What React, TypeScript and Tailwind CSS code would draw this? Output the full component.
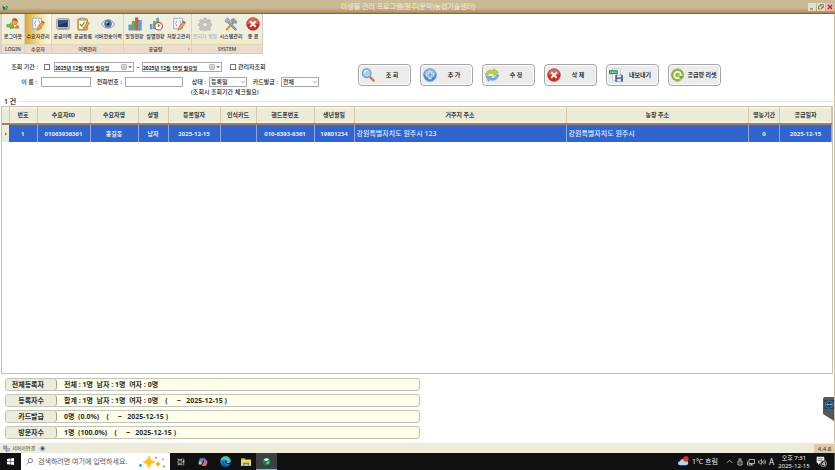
import React, { useState } from 'react';

interface IconProps {
  className?: string;
}

interface RibbonItem {
  label: string;
  icon: React.FC<IconProps>;
  width: string;
  active?: boolean;
  disabled?: boolean;
}

interface RibbonGroup {
  title: string;
  items: RibbonItem[];
  launcher?: boolean;
}

const Svg: React.FC<IconProps & { children: React.ReactNode }> = ({
  className = 'size-4',
  children,
}) => (
  <svg viewBox="0 0 16 16" className={`shrink-0 ${className}`} fill="none" aria-hidden="true">
    {children}
  </svg>
);

const LogoutIcon: React.FC<IconProps> = ({ className }) => (
  <Svg className={className}>
    <path d="M5 13c0-3 2-4.500 5-4.500s5.500 1.500 5.500 4.500z" fill="#d9822b" />
    <path d="M8 9l2 3 2-3z" fill="#fff3d6" />
    <circle cx="10" cy="5.500" r="3.200" fill="#e9a860" stroke="#b8651b" strokeWidth=".6" />
    <path d="M6.800 5c0-3 2-3.500 3.400-3.500S13.500 2.500 13.200 5c-2-.2-4-1-5-1.500z" fill="#b05a14" />
    <path d="M1 8.500h4V6.500L9 10l-4 3.500v-2H1z" fill="#7cc242" stroke="#4c8a1f" strokeWidth=".6" />
  </Svg>
);

const NoteIcon: React.FC<IconProps> = ({ className }) => (
  <Svg className={className}>
    <path d="M2 1.500h10v12H2z" fill="#f7f9fd" stroke="#90a5c8" />
    <path d="M6 4c-1.500 0-.5 3-2 3.500 1.500.5.5 3 2 3.500M8.500 4c1.500 0 .5 3 2 3.500-1.500.5-.5 3-2 3.500" stroke="#6d8cc4" strokeWidth=".9" />
    <path d="M13 4.500l2.500 1.800-5.500 7.500-3 1.500.5-3.400z" fill="#f0a040" stroke="#b56a1c" strokeWidth=".6" />
    <path d="M13 4.500l2.500 1.800-1 1.400L12 6z" fill="#d9534a" />
  </Svg>
);

const MonitorIcon: React.FC<IconProps> = ({ className }) => (
  <Svg className={className}>
    <rect x="1" y="2" width="14" height="12" rx="1.500" fill="#d8d4cb" stroke="#77736b" strokeWidth=".8" />
    <rect x="2.500" y="3.500" width="11" height="8" fill="#1d3768" />
    <path d="M2.500 3.500h11v3c-4 0-7 1-11 3z" fill="#33538c" />
    <path d="M3 12.800h10" stroke="#77736b" strokeWidth=".8" />
  </Svg>
);

const ClipboardIcon: React.FC<IconProps> = ({ className }) => (
  <Svg className={className}>
    <rect x="2" y="2" width="11" height="13" rx="1" fill="#e3a64c" stroke="#a66c20" strokeWidth=".7" />
    <path d="M3.500 4h8v9.500h-8z" fill="#fff" />
    <path d="M5 1h5v2.500H5z" fill="#b9bfca" stroke="#777f8d" strokeWidth=".5" />
    <path d="M4.500 8l2 2.500L10 5.500" stroke="#61a82c" strokeWidth="1.400" />
    <path d="M13.500 5.500l2 1.500-5 6.500-2.500 1 .4-2.700z" fill="#f0a040" stroke="#b56a1c" strokeWidth=".6" />
  </Svg>
);

const EyeIcon: React.FC<IconProps> = ({ className }) => (
  <Svg className={className}>
    <path d="M.5 8.500C3 4 6 3 8.200 3S13.500 4.500 15.500 8.500C13 12 10.500 12.800 8 12.800S2.500 11.500.5 8.500z" fill="#eef3f9" stroke="#7c8798" strokeWidth="1" />
    <circle cx="8" cy="7.800" r="4" fill="#5a86bb" stroke="#2e5587" strokeWidth=".7" />
    <circle cx="8" cy="7.800" r="1.900" fill="#14233a" />
    <circle cx="6.900" cy="6.500" r=".9" fill="#fff" />
  </Svg>
);

const ChartIcon: React.FC<IconProps> = ({ className }) => (
  <Svg className={className}>
    <rect x="1" y="9" width="3" height="6" fill="#5f9de0" stroke="#3a6fae" strokeWidth=".5" />
    <rect x="4.700" y="5" width="3" height="10" fill="#6ab549" stroke="#3f812a" strokeWidth=".5" />
    <rect x="8.400" y="1" width="3" height="14" fill="#e0574a" stroke="#a3332a" strokeWidth=".5" />
    <rect x="12.100" y="4" width="3" height="11" fill="#5f9de0" stroke="#3a6fae" strokeWidth=".5" />
  </Svg>
);

const ChartClockIcon: React.FC<IconProps> = ({ className }) => (
  <Svg className={className}>
    <rect x="1" y="8" width="3" height="6" fill="#5f9de0" />
    <rect x="4.700" y="4.500" width="3" height="9.500" fill="#6ab549" />
    <rect x="8.400" y="1" width="3" height="8" fill="#5f9de0" />
    <circle cx="11" cy="10.500" r="4.300" fill="#fff" stroke="#cf4a3e" strokeWidth="1.300" />
    <path d="M11 7.800v2.900l2-1.200" stroke="#444" strokeWidth=".9" />
  </Svg>
);

const GearIcon: React.FC<IconProps> = ({ className }) => (
  <Svg className={className}>
    <path
      d="M6.700 1h2.600l.4 2 1.400.6 1.700-1.200 1.900 1.900-1.200 1.700.6 1.300 2 .4v2.600l-2 .4-.6 1.400 1.200 1.700-1.900 1.800-1.700-1.100-1.400.5-.4 2H6.700l-.4-2-1.400-.5-1.700 1.100-1.900-1.800 1.200-1.700-.6-1.400-1.500-.4V7.700l1.500-.4.6-1.300-1.200-1.700 1.900-1.900 1.700 1.200L6.300 3z"
      fill="#c3c3c0"
      stroke="#a8a8a5"
      strokeWidth=".5"
    />
    <circle cx="8" cy="8.800" r="2.600" fill="#efeee4" stroke="#a0a09d" strokeWidth=".6" />
  </Svg>
);

const ToolsIcon: React.FC<IconProps> = ({ className }) => (
  <Svg className={className}>
    <path d="M4.500 5L13 14" stroke="#4775ae" strokeWidth="2.800" strokeLinecap="round" />
    <path d="M4.500 5L13 14" stroke="#9dbfe8" strokeWidth="1.200" strokeLinecap="round" />
    <path d="M1 3.500l1 2.500 2.500.6L6.500 4 5 1.500 2.800 1l1 2z" fill="#a9b6c6" stroke="#6c7b8f" strokeWidth=".5" />
    <path d="M10 7L3 14.300" stroke="#e09137" strokeWidth="2.400" strokeLinecap="round" />
    <path d="M7.500 3.500L11 1.500l4 4-1.200 2-2-1-1.800 1.200z" fill="#909dad" stroke="#5e6c7e" strokeWidth=".5" />
  </Svg>
);

const CloseIcon: React.FC<IconProps> = ({ className }) => (
  <Svg className={className}>
    <circle cx="8" cy="8" r="7.200" fill="#c93026" stroke="#9b2119" strokeWidth=".7" />
    <path d="M1.500 7.500a6.500 6.500 0 0113 0c-4 1.300-9 1.300-13 0z" fill="#e3685c" />
    <path d="M5.400 5.400l5.200 5.200m0-5.200l-5.200 5.200" stroke="#fff" strokeWidth="2.100" strokeLinecap="round" />
  </Svg>
);

const MagnifierIcon: React.FC<IconProps> = ({ className }) => (
  <Svg className={className}>
    <path d="M9.500 9.500l5 5" stroke="#c07a3a" strokeWidth="2.400" strokeLinecap="round" />
    <circle cx="6.500" cy="6" r="4.900" fill="#a9d0f5" stroke="#7698c8" strokeWidth="1.400" />
    <path d="M3.300 5.500c.5-2 2.500-3 4.200-2.500" stroke="#fff" strokeWidth="1.300" />
  </Svg>
);

const PlusIcon: React.FC<IconProps> = ({ className }) => (
  <Svg className={className}>
    <circle cx="8" cy="8" r="7.200" fill="#4d93d3" stroke="#3673ae" strokeWidth=".7" />
    <path d="M1.500 7.500a6.500 6.500 0 0113 0c-4 1.300-9 1.300-13 0z" fill="#8fc0ea" />
    <path d="M6.700 3.800h2.600v2.900h2.900v2.600H9.300v2.900H6.700V9.300H3.800V6.700h2.900z" fill="#69aae2" stroke="#fff" strokeWidth=".9" />
  </Svg>
);

const RefreshIcon: React.FC<IconProps> = ({ className }) => (
  <Svg className={className}>
    <path d="M.5 8C.5 3.500 5 1.500 10 3V.8L15.500 5 10 8.800V6.500C6.500 5.500 4 6 3 8.500z" fill="#b4d544" stroke="#8aaf2c" strokeWidth=".6" />
    <path d="M15.300 7.500c.7 5-5.300 8-9.800 6L4 15.300 1 9.500l7 .3-1.600 1.700c3 1 6-.5 6.400-3.500z" fill="#7db1e2" stroke="#5189c0" strokeWidth=".6" />
  </Svg>
);

const ExportIcon: React.FC<IconProps> = ({ className }) => (
  <Svg className={className}>
    <path d="M4 1h7l2 2v11H4z" fill="#fff" stroke="#9aa6b4" strokeWidth=".6" />
    <rect x="0" y="2.500" width="10" height="4.500" fill="#219460" />
    <path d="M1.500 4.700h7" stroke="#c5ecd9" strokeWidth="1.200" strokeDasharray="1.300 .6" />
    <path d="M7.500 8H15l.8.8V15.500H7.500z" fill="#52749f" stroke="#324e76" strokeWidth=".6" />
    <path d="M9.200 8.200h4.600v2.500H9.200zM9.500 12.500h4v3h-4z" fill="#edf2f8" />
  </Svg>
);

const ResetIcon: React.FC<IconProps> = ({ className }) => (
  <Svg className={className}>
    <circle cx="7.500" cy="8" r="7" fill="#8cbb3b" stroke="#69962a" strokeWidth=".6" />
    <path d="M10.300 10.500A3.700 3.700 0 1111 7v2" stroke="#fff" strokeWidth="1.900" />
    <path d="M7.800 8.500H15.800L11.700 14z" fill="#75a82b" stroke="#f4f9ea" strokeWidth=".6" />
  </Svg>
);

const AppIcon: React.FC<IconProps> = ({ className }) => (
  <Svg className={className}>
    <circle cx="8" cy="8.500" r="6.800" fill="#178052" />
    <path d="M3 5.500C5 2 10 1.500 12.500 4 11 7 7 8.500 3 5.500z" fill="#d8f0e2" />
    <path d="M8 9.500c2-2 4-2 5.500-1-.5 3-2.500 4.500-5 4.500z" fill="#6ed39c" />
  </Svg>
);

const CalendarIcon: React.FC<IconProps> = ({ className }) => (
  <Svg className={className}>
    <rect x="2" y="2" width="12" height="12" fill="#eef0f5" stroke="#7d869c" strokeWidth="1.500" />
    <path d="M2 5.500h12M6 6v8M10 6v8M2 10h12" stroke="#8b94a9" strokeWidth="1" />
  </Svg>
);

const ribbonGroups: RibbonGroup[] = [
  { title: 'LOGIN', items: [{ label: '로그아웃', icon: LogoutIcon, width: 'w-[22px]' }] },
  { title: '수요자', items: [{ label: '수요자관리', icon: NoteIcon, width: 'w-[26px]', active: true }] },
  {
    title: '이력관리',
    items: [
      { label: '공급이력', icon: MonitorIcon, width: 'w-[21px]' },
      { label: '공급등록', icon: ClipboardIcon, width: 'w-5' },
      { label: '서버전송이력', icon: EyeIcon, width: 'w-[30px]' },
    ],
  },
  {
    title: '공급량',
    launcher: true,
    items: [
      { label: '일일현황', icon: ChartIcon, width: 'w-[21px]' },
      { label: '월별현황', icon: ChartClockIcon, width: 'w-[21px]' },
      { label: '저장고관리', icon: NoteIcon, width: 'w-[25px]' },
    ],
  },
  {
    title: 'SYSTEM',
    items: [
      { label: '관리자 설정', icon: GearIcon, width: 'w-[26px]', disabled: true },
      { label: '시스템관리', icon: ToolsIcon, width: 'w-[26px]' },
      { label: '종 료', icon: CloseIcon, width: 'w-[18px]' },
    ],
  },
];

const actions = [
  { label: '조 회', icon: MagnifierIcon },
  { label: '추 가', icon: PlusIcon },
  { label: '수 정', icon: RefreshIcon },
  { label: '삭 제', icon: CloseIcon },
  { label: '내보내기', icon: ExportIcon },
  { label: '공급량 리셋', icon: ResetIcon },
];

const columns = [
  { title: '번호', width: 'w-7' },
  { title: '수요자ID', width: 'w-[53px]' },
  { title: '수요자명', width: 'w-12' },
  { title: '성별', width: 'w-[30px]' },
  { title: '등록일자', width: 'w-[52px]' },
  { title: '인식카드', width: 'w-9' },
  { title: '핸드폰번호', width: 'w-[58px]' },
  { title: '생년월일', width: 'w-10' },
  { title: '거주지 주소', width: '' },
  { title: '농장 주소', width: 'w-[22%]' },
  { title: '영농기간', width: 'w-[31px]' },
  { title: '공급일자', width: 'w-[52px]' },
];

const member = [
  '1',
  '01063936361',
  '홍길동',
  '남자',
  '2025-12-15',
  '',
  '010-6393-6361',
  '19801234',
  '강원특별자치도 원주시 123',
  '강원특별자치도 원주시',
  '0',
  '2025-12-15',
];

const summary = [
  { label: '전체등록자', value: '전체 : 1명  남자 : 1명  여자 : 0명' },
  { label: '등록자수', value: '합계 : 1명  남자 : 1명  여자 : 0명    (     ~   2025-12-15 )' },
  { label: '카드발급', value: '0명  (0.0%)    (     ~   2025-12-15 )' },
  { label: '방문자수', value: '1명  (100.0%)    (     ~   2025-12-15 )' },
];

const TitleBar = () => (
  <header className="flex h-[14px] shrink-0 items-center border-b border-[#80653b] bg-linear-to-b from-[#cbba96] from-60% to-[#a98a5c] px-px">
    <AppIcon className="ml-px size-[6px]" />
    <h1 className="flex-1 text-center text-[7px] leading-none font-normal text-[#f4eddb]">
      미생물 관리 프로그램(원주(문막)농업기술센터)
    </h1>
    <div className="flex gap-px">
      <button type="button" aria-label="최소화" className="size-2 bg-[#e7dfca] text-[#6b6245]">
        <Svg className="size-2">
          <path d="M4 12h6" stroke="currentColor" strokeWidth="2" />
        </Svg>
      </button>
      <button type="button" aria-label="이전 크기로" className="size-2 bg-[#e7dfca] text-[#667047]">
        <Svg className="size-2">
          <path d="M6 6V3h7v6h-3M3 6h7v6H3z" stroke="currentColor" strokeWidth="1.500" />
        </Svg>
      </button>
      <button type="button" aria-label="닫기" className="size-2 bg-[#f2b5b3] text-[#b5203a]">
        <Svg className="size-2">
          <path d="M4 4l8 8m0-8l-8 8" stroke="currentColor" strokeWidth="2.500" />
        </Svg>
      </button>
    </div>
  </header>
);

const Ribbon = () => (
  <nav className="flex shrink-0">
    <div className="flex gap-px border-r border-b border-[#d5cdbd] bg-[#d9d3c4] pl-[2px]">
      {ribbonGroups.map((group) => (
        <section key={group.title} className="flex flex-col bg-[#edecda]">
          <div className="flex h-[31px] border-b border-[#ddd8bd] bg-linear-to-b from-[#efeedf] from-85% to-[#f1ebc6] to-85%">
            {group.items.map(({ label, icon: Icon, width, active, disabled }) => (
              <button
                key={label}
                type="button"
                disabled={disabled}
                className={`flex flex-col items-center gap-[3px] pt-[3px] text-[5px] leading-none font-medium whitespace-nowrap ${width} ${
                  active ? 'bg-linear-to-r from-[#dba92f] via-[#f4dc9b] to-[#fffbe9]' : ''
                } ${disabled ? 'text-[#b5b3a8]' : 'text-[#2f2d28]'}`}
              >
                <Icon className="size-[14px]" />
                <span>{label}</span>
              </button>
            ))}
          </div>
          <h2 className="flex h-2 items-center justify-center bg-[#ebdccd] text-[5px] leading-none font-medium text-[#3e3830]">
            <span className="flex-1 text-center">{group.title}</span>
            {group.launcher && (
              <Svg className="mr-px size-[3px]">
                <path d="M3 3l10 10V5z" fill="#76685a" />
              </Svg>
            )}
          </h2>
        </section>
      ))}
    </div>
  </nav>
);

const DateField: React.FC<{ label: string }> = ({ label }) => {
  const [date, setDate] = useState('2025년 12월 15일 월요일');

  return (
    <div className="flex h-[10px] w-20 items-center border border-[#a8a8a8] bg-white">
      <input
        aria-label={label}
        value={date}
        onChange={(e) => setDate(e.target.value)}
        className="h-2 w-0 flex-1 text-[5px] leading-none font-bold focus:outline-none"
      />
      <button type="button" aria-label="달력" className="flex items-center gap-px pr-px">
        <CalendarIcon className="size-[6px]" />
        <Svg className="size-1">
          <path d="M1 5h14l-7 7z" fill="#444" />
        </Svg>
      </button>
    </div>
  );
};

const SelectField: React.FC<{ id: string; options: string[] }> = ({ id, options }) => (
  <div className="relative">
    <select
      id={id}
      className="block h-[10px] w-[38px] appearance-none border border-[#a8a8a8] bg-white pl-px text-[6px] leading-none font-medium"
    >
      {options.map((option) => (
        <option key={option}>{option}</option>
      ))}
    </select>
    <Svg className="pointer-events-none absolute top-[3px] right-[2px] size-1">
      <path d="M1 4l7 7 7-7" stroke="#555" strokeWidth="2" />
    </Svg>
  </div>
);

const checkboxClass = 'size-[6px] appearance-none border border-[#777] bg-white checked:bg-[#316ac5]';
const textBoxClass = 'h-[10px] border border-[#a8a8a8] bg-white px-px text-[6px] leading-none focus:outline-none';

const SearchForm = () => (
  <form
    onSubmit={(e) => e.preventDefault()}
    className="flex shrink-0 items-start pt-2 text-[6px] leading-none font-medium text-[#222]"
  >
    <div className="flex w-[358px] flex-col gap-[5px]">
      <div className="flex h-[10px] items-center">
        <label htmlFor="usePeriod" className="w-[38px] text-right">
          조회 기간 :
        </label>
        <input id="usePeriod" type="checkbox" className={`mr-1 ml-[6px] ${checkboxClass}`} />
        <DateField label="시작일" />
        <span className="w-2 text-center">~</span>
        <DateField label="종료일" />
        <input id="adminOnly" type="checkbox" className={`mr-[2px] ml-2 ${checkboxClass}`} />
        <label htmlFor="adminOnly">관리자조회</label>
      </div>
      <div className="flex h-[10px] items-center">
        <label htmlFor="name" className="w-[37px] text-right">
          이 름 :
        </label>
        <input id="name" className={`ml-1 w-[50px] ${textBoxClass}`} />
        <label htmlFor="phone" className="w-[31px] text-right">
          전화번호 :
        </label>
        <input id="phone" className={`ml-[3px] w-[58px] ${textBoxClass}`} />
        <label htmlFor="status" className="mr-[3px] w-[23px] text-right">
          상태 :
        </label>
        <SelectField id="status" options={['등록일', '수정일']} />
        <label htmlFor="card" className="mr-[3px] w-[31px] text-right">
          카드발급 :
        </label>
        <SelectField id="card" options={['전체', '발급', '미발급']} />
      </div>
      <p className="-mt-[3px] pl-[191px]">(조회시 조회기간 체크필요)</p>
    </div>
    <div className="flex gap-[9px] pt-[2px]">
      {actions.map(({ label, icon: Icon }) => (
        <button
          key={label}
          type="button"
          className="flex h-[22px] w-[53px] items-center rounded-[4px] border border-[#a5a5a5] bg-[#ececec] px-px text-[6px] leading-none font-bold whitespace-nowrap text-[#333] shadow-[inset_0_0_0_1px_#fff]"
        >
          <Icon className="ml-px size-[14px]" />
          <span className="flex-1 text-center whitespace-pre">{label}</span>
        </button>
      ))}
    </div>
  </form>
);

const MemberTable = () => (
  <div className="mx-px flex-1 border border-[#c8c1b1] bg-white">
    <table className="w-full table-fixed border-collapse text-[6px] leading-none">
      <thead>
        <tr className="h-[17px] border-b-2 border-[#988465] bg-linear-to-b from-[#f8f7ef] to-[#ecebd9] to-20%">
          <th className="w-[7px] border-r border-[#cfc7b4]" />
          {columns.map(({ title, width }) => (
            <th
              key={title}
              className={`border-r border-[#cfc7b4] p-0 text-[6px] font-bold whitespace-nowrap text-[#3a3831] ${width}`}
            >
              {title}
            </th>
          ))}
        </tr>
      </thead>
      <tbody>
        <tr className="h-[18px] bg-[#3165cd] text-[#e6ecf9]">
          <td className="bg-[#edebd9] p-0">
            <Svg className="mx-auto size-1">
              <path d="M4 2l8 6-8 6z" fill="#77715f" />
            </Svg>
          </td>
          {member.map((value, index) => (
            <td
              key={columns[index].title}
              className={`border-r border-[#91a7e1] p-0 whitespace-nowrap ${
                index === 8 || index === 9
                  ? 'pl-[2px] text-left text-[7px] font-medium'
                  : 'text-center font-bold'
              }`}
            >
              {value}
            </td>
          ))}
        </tr>
      </tbody>
    </table>
  </div>
);

const Summary = () => (
  <dl className="flex shrink-0 flex-col gap-[3px] py-1 pl-[5px] text-[7px] leading-none font-bold text-[#2d2d29]">
    {summary.map(({ label, value }) => (
      <div
        key={label}
        className="flex h-[13px] w-1/2 overflow-hidden rounded-[3px] border border-[#c4c4b6] bg-[#fdfee9]"
      >
        <dt className="flex w-[51px] items-center justify-end rounded-[3px] border-r border-[#9fa08f] bg-[#ebecdc] pr-3">
          {label}
        </dt>
        <dd className="flex items-center pl-[7px] whitespace-pre">{value}</dd>
      </div>
    ))}
  </dl>
);

const StatusBar = () => (
  <footer className="flex h-[10px] shrink-0 items-center border-t border-[#f6e4d4] bg-[#edecda] pl-[3px] text-[5px] leading-none text-[#444]">
    <Svg className="size-[7px]">
      <path d="M1 2h8v6H1z" fill="#8aa9d4" stroke="#566f96" />
      <path d="M7 8h8v6H7z" fill="#b5c9e6" stroke="#566f96" />
      <path d="M2 9l8 6" stroke="#cf5b48" strokeWidth="1.500" />
    </Svg>
    <span className="ml-[2px]">서버미연결</span>
    <EyeIcon className="ml-1 size-[7px]" />
    <span className="ml-auto flex h-full w-[21px] items-center justify-center bg-[#e0cba6] text-[6px] font-medium">
      4.4.8
    </span>
  </footer>
);

const taskButtonClass = 'flex h-full w-[22px] items-center justify-center';

const Taskbar = () => (
  <div className="flex h-[17px] shrink-0 items-center bg-[#111] text-[6px] leading-none text-[#eee]">
    <button type="button" aria-label="시작" className="flex h-full w-[21px] items-center justify-center">
      <Svg className="size-[7px]">
        <path d="M0 2l7-1v6.500H0zM8 .9L16 0v7.500H8zM0 8.500h7V15l-7-1zM8 8.500h8V16l-8-1z" fill="#fff" />
      </Svg>
    </button>
    <label htmlFor="taskSearch" className="flex h-full w-[149px] items-center bg-white pl-[5px]">
      <Svg className="size-[7px]">
        <circle cx="10" cy="6" r="5" stroke="#444" strokeWidth="1.500" />
        <path d="M6.500 9.500L1 15" stroke="#444" strokeWidth="1.500" />
      </Svg>
      <input
        id="taskSearch"
        placeholder="검색하려면 여기에 입력하세요."
        className="ml-[5px] w-0 flex-1 text-[7px] leading-none text-[#333] placeholder:text-[#555] focus:outline-none"
      />
      <svg viewBox="0 0 28 14" className="mr-1 h-[14px] w-7" aria-hidden="true">
        <path d="M11 1q1 5 6 6-5 1-6 6-1-5-6-6 5-1 6-6z" fill="#fbc21c" stroke="#fbc21c" strokeWidth=".8" />
        <path d="M20 6q.5 2.500 3 3-2.500.5-3 3-.5-2.500-3-3 2.500-.5 3-3z" fill="#f5a623" />
        <circle cx="2.500" cy="10.500" r="1.400" fill="#2b9fd9" />
        <circle cx="18" cy="2.800" r="1" fill="#e76b3d" />
        <circle cx="26" cy="11.500" r="1.100" fill="#58b947" />
        <circle cx="25" cy="4.500" r=".9" fill="#f28a78" />
      </svg>
    </label>
    <button type="button" aria-label="작업 보기" className={taskButtonClass}>
      <Svg className="size-2">
        <path d="M2 1v2h8V1M2 15v-2h8v2M2 5.500h8v5H2zM13.500 1v14" stroke="#ddd" strokeWidth="1.300" />
        <path d="M12.500 5.500h2v3h-2z" fill="#fff" />
      </Svg>
    </button>
    <button type="button" aria-label="Copilot" className={taskButtonClass}>
      <Svg className="size-[10px]">
        <path d="M4 2h6l2 4H8l-2 6H3C0 12 1 8 2 5s1-3 2-3z" fill="#2c9bd9" />
        <path d="M2 7h4l-1.500 5H3C.5 12 1 9 2 7z" fill="#f1c83a" />
        <path d="M10 2c2 0 2 3 3 3 3 0 2 4 1 7s-2 2.500-4 2.500H6c2 0 2-3 3-6l1-3z" fill="#d45cb0" />
        <path d="M8 9l-1 3c-.5 1.500-1 2.500-2.500 2.500H10c1.500 0 2.500-1 3-2.500z" fill="#ef6a45" />
      </Svg>
    </button>
    <button type="button" aria-label="Edge" className={taskButtonClass}>
      <Svg className="size-[11px]">
        <circle cx="8" cy="8" r="7.500" fill="#1683d1" />
        <path d="M.7 7C1 3 4.500.5 8 .5c5 0 8 4 7.500 7.500-.4 2.500-4 3.500-6 2 2-2 .5-4.500-2-4.500C4 5.500 2 6 .7 7z" fill="#48c9a3" />
        <path d="M6 8c-1 4 2 7 7.500 5A7.500 7.500 0 016 15C2.500 13 3 9 6 8z" fill="#0d4f9c" />
        <path d="M8 7c-2 2 0 5 5.500 4.500l1.500-2c-2 1.200-5 1-5.700.3C10 9 9.500 7.500 8 7z" fill="#111" />
      </Svg>
    </button>
    <button type="button" aria-label="파일 탐색기" className="flex h-full w-5 items-center justify-center">
      <Svg className="size-[10px]">
        <path d="M0 2h6l1.500 2H16v10H0z" fill="#e7ae36" />
        <path d="M0 5h16v9H0z" fill="#fbd666" />
        <path d="M3 9h10v5h-2.500v-2.500h-5V14H3z" fill="#3d8fd1" />
      </Svg>
    </button>
    <button
      type="button"
      aria-label="미생물 관리 프로그램"
      className="flex h-full w-[21px] items-center justify-center border-b border-[#76b9ed] bg-[#3d3f40]"
    >
      <AppIcon className="size-[9px]" />
    </button>
    <div className="ml-auto flex h-full items-center">
      <Svg className="size-[11px]">
        <path d="M3 13.500a3 3 0 010-6 4 4 0 017.500-1A3.500 3.500 0 0112 13.500z" fill="#b9d2f4" />
        <circle cx="11.500" cy="4.500" r="4" fill="#d8372a" />
      </Svg>
      <span className="mr-[9px] ml-[3px] w-[25px] text-[7px] whitespace-nowrap">1°C 흐림</span>
      <div className="flex items-center gap-[3px]">
        <Svg className="size-[7px]">
          <path d="M2 11l6-6 6 6" stroke="#eee" strokeWidth="1.600" />
        </Svg>
        <Svg className="size-2">
          <path d="M4 6h8v8H4zM5 2h6M8 2v4M8 8.500v3" stroke="#eee" strokeWidth="1.400" />
        </Svg>
        <Svg className="size-2">
          <path d="M4 3h11v8H4zM1 7v7h6M9 11v3M6 14h7" stroke="#eee" strokeWidth="1.400" />
        </Svg>
        <Svg className="size-2">
          <path d="M1 6h2l4-3v10l-4-3H1zM9 6q1.500 2 0 4M11 4.500q3 3.500 0 7M13.500 3q4 5 0 10" stroke="#eee" strokeWidth="1.200" />
        </Svg>
        <span className="text-[8px]">A</span>
      </div>
      <div className="ml-1 w-8 text-center leading-[8px] whitespace-nowrap">
        <div>오후 7:31</div>
        <div>2025-12-15</div>
      </div>
      <button type="button" aria-label="알림" className="mr-[7px] ml-[6px]">
        <Svg className="size-[11px]">
          <path d="M1 1h11v9H6l-3 3v-3H1z" fill="#eee" />
          <path d="M3 4h7M3 6.500h7" stroke="#555" strokeWidth="1" />
          <circle cx="11" cy="11" r="4.500" fill="#222" stroke="#ddd" strokeWidth=".9" />
          <path d="M12 14V8.500L9 12h4.300" stroke="#fff" strokeWidth="1.100" />
        </Svg>
      </button>
      <span className="h-full border-r border-[#555]" />
    </div>
  </div>
);

const App: React.FC = () => (
  <div className="flex h-screen flex-col bg-white font-['Noto_Sans','Noto_Sans_CJK_KR',sans-serif] text-black">
    <TitleBar />
    <main className="relative flex flex-1 flex-col border-r border-[#cdbfa4]">
      <Ribbon />
      <SearchForm />
      <div className="mt-[2px] flex h-[9px] shrink-0 items-center gap-[2px] pl-1 text-[7px] leading-none font-medium">
        <span>1 건</span>
        <hr className="flex-1 border-[#e6e6e6]" />
      </div>
      <MemberTable />
      <Summary />
      <button type="button" aria-label="원격 지원" className="absolute right-0 bottom-[22px]">
        <svg viewBox="0 0 11 24" className="h-6 w-[11px]" aria-hidden="true">
          <path d="M2 0h9v24L0 17V2q0-2 2-2z" fill="#555759" />
          <rect x="1.500" y="3" width="9.500" height="9" fill="#123f63" />
          <ellipse cx="6.300" cy="7.500" rx="4" ry="3.500" fill="none" stroke="#5e8cac" strokeWidth=".8" />
          <path d="M3 7.500l1.800-1.500v1h3v-1l1.800 1.500L7.800 9V8h-3v1z" fill="#7fa8c2" />
        </svg>
      </button>
    </main>
    <StatusBar />
    <Taskbar />
  </div>
);

export default App;
